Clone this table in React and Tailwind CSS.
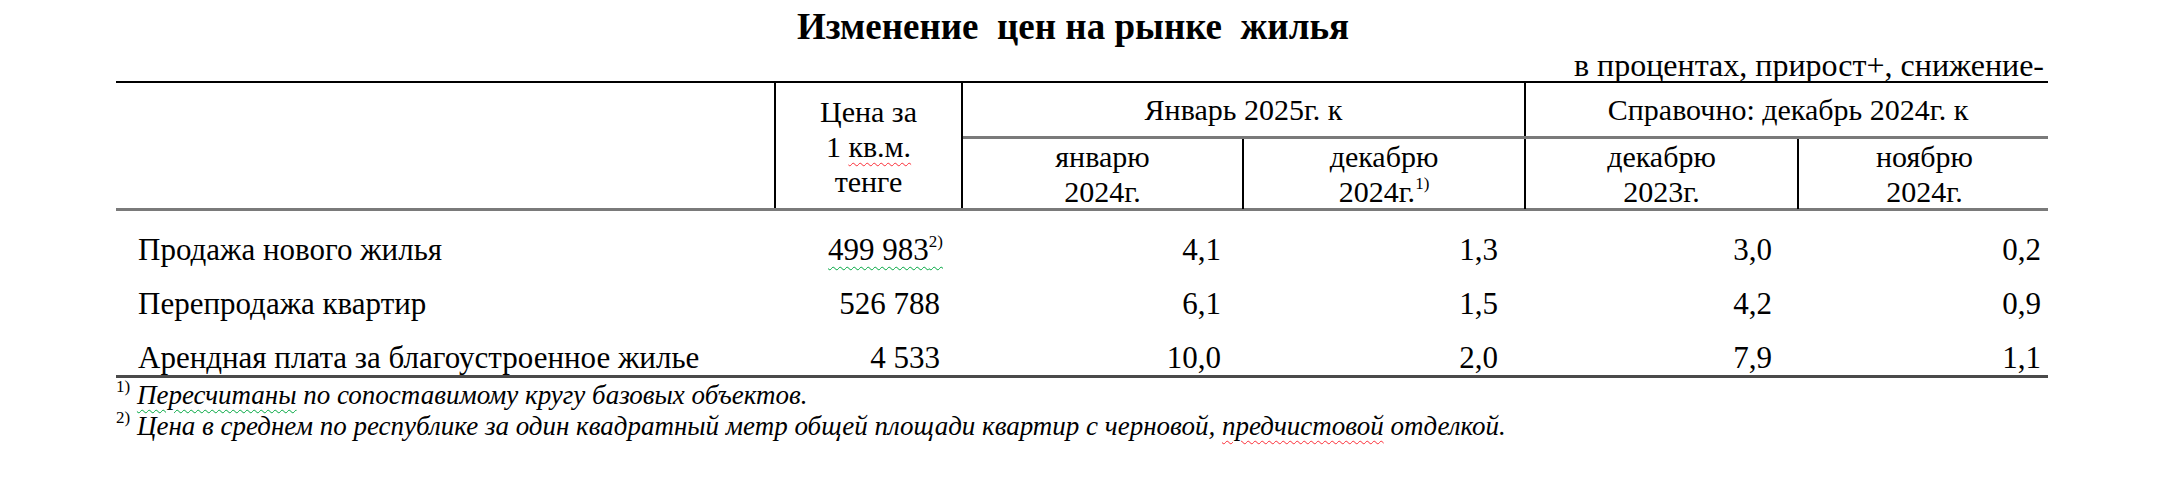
const rows = [
  { name: 'Продажа нового жилья', price: '499 983', note: true, values: ['4,1', '1,3', '3,0', '0,2'] },
  { name: 'Перепродажа квартир', price: '526 788', values: ['6,1', '1,5', '4,2', '0,9'] },
  { name: 'Арендная плата за благоустроенное жилье', price: '4 533', values: ['10,0', '2,0', '7,9', '1,1'] },
]

const valuePad = ['pr-[19px]', 'pr-[24px]', 'pr-[23px]', 'pr-[7px]']

const Sup = ({ children }) => (
  <sup className="relative top-[-2px] text-[17px] leading-none align-super">{children}</sup>
)

export default function App() {
  return (
    <div className="h-[484px] w-[2160px] overflow-hidden bg-white font-['Liberation_Serif',serif] text-black">
      <h1 className="pt-[5px] pr-[14px] text-center text-[37px] font-bold leading-[44px] whitespace-pre">
        {'Изменение  цен на рынке  жилья'}
      </h1>

      <div className="ml-[116px] w-[1932px]">
        <div className="pr-[4px] text-right text-[32px] leading-[32px]">в процентах, прирост+, снижение-</div>

        {/* header */}
        <div className="grid grid-cols-[658px_187px_1087px] border-t-2 border-b-[3px] border-t-black border-b-[#7a7a7a] text-[30px] leading-[35px]">
          <div />
          <div className="flex flex-col items-center border-l-2 border-black pt-[11px] text-center">
            <span>Цена за</span>
            <span>
              1 <span className="underline decoration-wavy decoration-red-500 decoration-1 underline-offset-[5px]">кв.м.</span>
            </span>
            <span>тенге</span>
          </div>
          <div className="flex flex-col border-l-2 border-black">
            <div className="grid h-[56px] grid-cols-[561px_526px] border-b-[3px] border-[#7a7a7a]">
              <div className="flex items-center justify-center">Январь 2025г. к</div>
              <div className="flex items-center justify-center border-l-2 border-black">Справочно: декабрь 2024г. к</div>
            </div>
            <div className="grid h-[69px] grid-cols-[279px_282px_273px_253px] text-center">
              <div>январю<br />2024г.</div>
              <div className="border-l-2 border-black">
                декабрю<br />2024г.<Sup>1)</Sup>
              </div>
              <div className="border-l-2 border-black">декабрю<br />2023г.</div>
              <div className="border-l-2 border-black">ноябрю<br />2024г.</div>
            </div>
          </div>
        </div>

        {/* body */}
        <div className="flex flex-col gap-[20px] border-b-[3px] border-[#4a4a4a] pt-[22px] text-[31px] leading-[34px]">
          {rows.map((row) => (
            <div key={row.name} className="grid grid-cols-[658px_187px_279px_282px_273px_253px]">
              <div className="pl-[22px] whitespace-nowrap">{row.name}</div>
              <div className="pr-[18px] text-right whitespace-nowrap">
                {row.note ? (
                  <span className="underline decoration-wavy decoration-green-600 decoration-1 underline-offset-[6px]">
                    {row.price}
                    <Sup>2)</Sup>
                  </span>
                ) : (
                  <span className="pr-[3px]">{row.price}</span>
                )}
              </div>
              {row.values.map((v, i) => (
                <div key={i} className={`text-right ${valuePad[i]}`}>{v}</div>
              ))}
            </div>
          ))}
        </div>

        {/* footnotes */}
        <div className="pt-[2px] text-[27px] italic leading-[31px]">
          <div className="whitespace-nowrap">
            <Sup>
              <span className="not-italic">1)</span>
            </Sup>{' '}
            <span className="underline decoration-wavy decoration-green-600 decoration-1 underline-offset-[5px]">Пересчитаны</span>{' '}
            по сопоставимому кругу базовых объектов.
          </div>
          <div className="whitespace-nowrap">
            <Sup>
              <span className="not-italic">2)</span>
            </Sup>{' '}
            Цена в среднем по республике за один квадратный метр общей площади квартир с черновой,{' '}
            <span className="underline decoration-wavy decoration-red-500 decoration-1 underline-offset-[5px]">предчистовой</span>{' '}
            отделкой.
          </div>
        </div>
      </div>
    </div>
  )
}
